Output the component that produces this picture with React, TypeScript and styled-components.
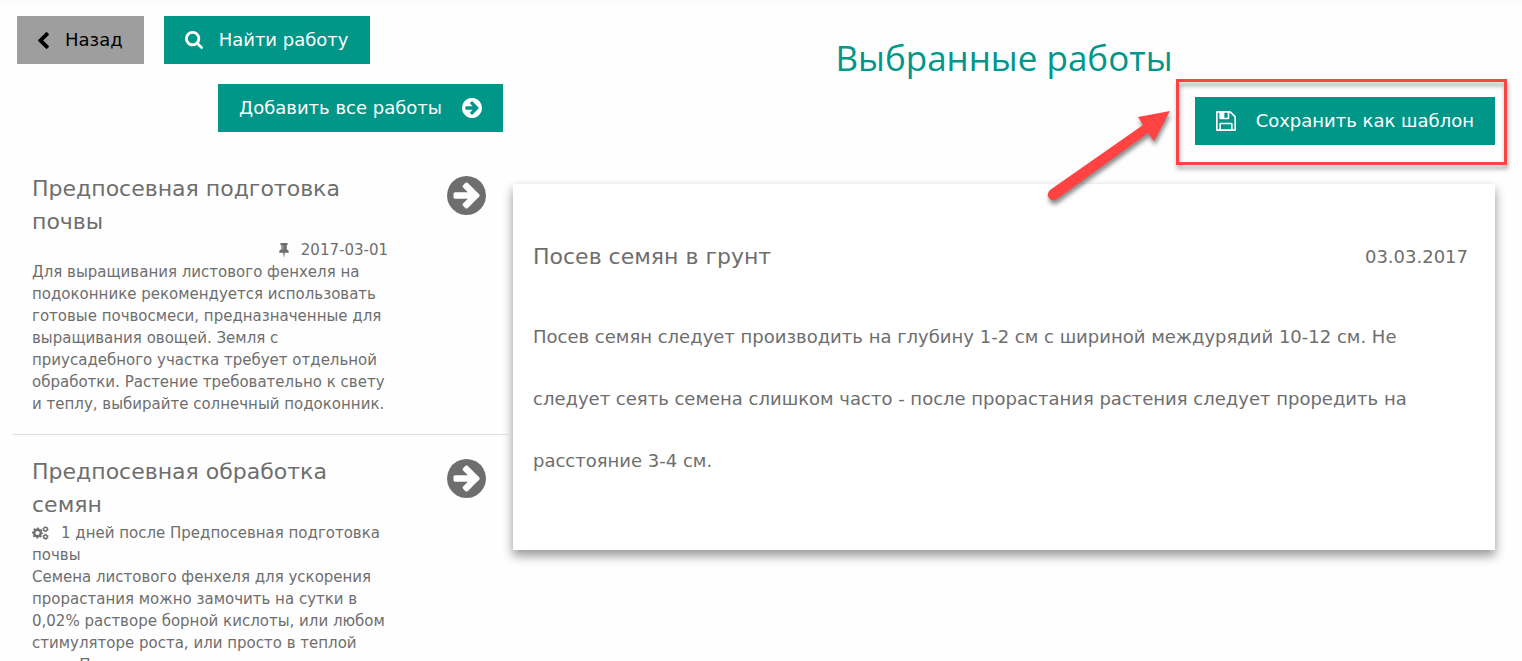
import React from "react";
import styled, { createGlobalStyle } from "styled-components";

const GlobalStyle = createGlobalStyle`
  *, *::before, *::after { box-sizing: border-box; }
  html { scrollbar-width: none; }
  body {
    margin: 0;
    background: #fefefe;
    color: #6e6e6e;
    font: 15px/22px Verdana, "DejaVu Sans", sans-serif;
  }
  h1, h2, p { margin: 0; font-weight: 400; }
`;

const Page = styled.div`
  border-top: 3px solid #fafafa;
  padding: 13px 27px 0 13px;
  display: grid;
  grid-template-columns: 1fr 2fr;
  align-items: start;
`;

const Sidebar = styled.aside`
  min-width: 0;
`;

const Toolbar = styled.div<{ $end?: boolean }>`
  display: flex;
  gap: 20px;
  padding: 0 4px;
  margin-bottom: 20px;
  justify-content: ${(p) => (p.$end ? "flex-end" : "flex-start")};
`;

const Button = styled.button<{ $muted?: boolean; $wide?: boolean }>`
  display: inline-flex;
  align-items: center;
  gap: ${(p) => (p.$wide ? 20 : 16)}px;
  height: 48px;
  padding: 0 21px;
  border: 0;
  background: ${(p) => (p.$muted ? "#9e9e9e" : "#009688")};
  color: ${(p) => (p.$muted ? "#000" : "#fff")};
  font: inherit;
  font-size: 18px;
  white-space: nowrap;
  cursor: pointer;
`;

const WorkList = styled.ul`
  list-style: none;
  margin: 0;
  padding: 0;
`;

const WorkItem = styled.li`
  display: flex;
  justify-content: space-between;
  align-items: flex-start;
  padding: 20px 19px 19px;
  border-bottom: 1px solid #ddd;
`;

const WorkBody = styled.div`
  width: 356px;
`;

const WorkTitle = styled.h2`
  padding-bottom: 1px;
  font-size: 22px;
  line-height: 33px;
`;

const WorkMeta = styled.p<{ $end?: boolean }>`
  text-align: ${(p) => (p.$end ? "right" : "left")};

  svg {
    margin-right: 12px;
    vertical-align: -2px;
  }
`;

const WorkText = styled.p``;

const AddButton = styled.button`
  display: flex;
  padding: 4px 2px;
  border: 0;
  background: none;
  color: inherit;
  cursor: pointer;
`;

const Selected = styled.main`
  min-width: 0;
  padding-left: 6px;
`;

const SelectedTitle = styled.h1`
  padding-top: 12px;
  color: #009688;
  font-family: "Segoe UI", "Open Sans", sans-serif;
  font-size: 35px;
  line-height: 60px;
  text-align: center;
`;

const SaveRow = styled.div`
  display: flex;
  justify-content: flex-end;
  margin: 9px 0 39px;
`;

const Highlighted = styled.div`
  position: relative;
`;

const HighlightFrame = styled.div`
  position: absolute;
  inset: -18px -12px -20px -19px;
  border: 3px solid #ff4343;
  filter: drop-shadow(1px 4px 2px rgba(0, 0, 0, 0.35));
  pointer-events: none;
`;

const HighlightArrow = styled.svg`
  position: absolute;
  right: 100%;
  top: 0;
  margin-right: 14px;
  overflow: visible;
  filter: drop-shadow(1px 4px 2px rgba(0, 0, 0, 0.45));
  pointer-events: none;
`;

const Card = styled.article`
  padding: 42px 27px 58px 20px;
  background: #fff;
  box-shadow: 0 6px 10px rgba(0, 0, 0, 0.25), 0 5px 10px rgba(0, 0, 0, 0.2);
  font-size: 18px;
  line-height: 62px;
`;

const CardHeader = styled.header`
  display: flex;
  justify-content: space-between;
  margin-bottom: 18px;
`;

const CardTitle = styled.h2`
  font-size: 22px;
`;

const CardText = styled.p`
  padding-right: 40px;
`;

const glyphs = {
  back: "M1427 301l-531 531 531 531q19 19 19 45t-19 45l-166 166q-19 19-45 19t-45-19l-742-742q-19-19-19-45t19-45l742-742q19-19 45-19t45 19l166 166q19 19 19 45t-19 45z",
  search:
    "M1216 832q0-185-131.5-316.5t-316.5-131.5-316.5 131.5-131.5 316.5 131.5 316.5 316.5 131.5 316.5-131.5 131.5-316.5zm512 832q0 52-38 90t-90 38q-54 0-90-38l-343-342q-179 124-399 124-143 0-273.5-55.5t-225-150-150-225-55.5-273.5 55.5-273.5 150-225 225-150 273.5-55.5 273.5 55.5 225 150 150 225 55.5 273.5q0 220-124 399l343 343q37 37 37 90z",
  next: "M1413 896q0-27-18-45l-91-91-362-362q-18-18-45-18t-45 18l-91 91q-18 18-18 45t18 45l189 189h-502q-26 0-45 19t-19 45v128q0 26 19 45t45 19h502l-189 189q-19 19-19 45t19 45l91 91q18 18 45 18t45-18l362-362 91-91q18-18 18-45zm251 0q0 209-103 385.5t-279.5 279.5-385.5 103-385.5-103-279.5-279.5-103-385.5 103-385.5 279.5-279.5 385.5-103 385.5 103 279.5 279.5 103 385.5z",
  save: "M512 1536h768v-384h-768v384zm896 0h128v-896q0-14-10-38.5t-20-34.5l-281-281q-10-10-34-20t-39-10v416q0 40-28 68t-68 28h-576q-40 0-68-28t-28-68v-416h-128v1280h128v-416q0-40 28-68t68-28h832q40 0 68 28t28 68v416zm-384-928v-320q0-13-9.5-22.5t-22.5-9.5h-192q-13 0-22.5 9.5t-9.5 22.5v320q0 13 9.5 22.5t22.5 9.5h192q13 0 22.5-9.5t9.5-22.5zm640 32v928q0 40-28 68t-68 28h-1344q-40 0-68-28t-28-68v-1344q0-40 28-68t68-28h928q40 0 88 20t76 48l280 280q28 28 48 76t20 88z",
  pin: "M800 864v-448q0-14-9-23t-23-9-23 9-9 23v448q0 14 9 23t23 9 23-9 9-23zm672 352q0 26-19 45t-45 19h-429l-51 483q-2 12-10.5 20.5t-20.5 8.5h-1q-27 0-32-27l-76-485h-404q-26 0-45-19t-19-45q0-123 78.5-221.5t177.5-98.5v-512q-52 0-90-38t-38-90 38-90 90-38h640q52 0 90 38t38 90-38 90-90 38v512q99 0 177.5 98.5t78.5 221.5z",
};

// Visible bounds of each glyph on its 1792-unit grid.
const bounds: Record<keyof typeof glyphs, [number, number, number, number]> = {
  back: [410, 26, 1036, 1612],
  search: [64, 128, 1664, 1664],
  next: [128, 128, 1536, 1536],
  save: [128, 128, 1536, 1536],
  pin: [320, 128, 1152, 1664],
};

function Icon({ name, height }: { name: keyof typeof glyphs; height: number }) {
  const [x, y, w, h] = bounds[name];
  return (
    <svg
      viewBox={`${x} ${y} ${w} ${h}`}
      width={Math.round((height * w) / h)}
      height={height}
      fill="currentColor"
      aria-hidden="true"
    >
      <path d={glyphs[name]} />
    </svg>
  );
}

// One large toothed wheel with two small ones to its right.
function CogsIcon() {
  return (
    <svg width="17" height="14" viewBox="0 0 17 14" fill="none" stroke="currentColor" aria-hidden="true">
      <circle cx="5.5" cy="7" r="3.3" strokeWidth="2.4" />
      <circle cx="5.5" cy="7" r="4.8" strokeWidth="1.5" strokeDasharray="1.9 1.87" strokeDashoffset="0.95" />
      <circle cx="13.5" cy="3.2" r="1.8" strokeWidth="1.4" />
      <circle cx="13.5" cy="3.2" r="2.7" strokeWidth="0.8" strokeDasharray="1.4 1.43" />
      <circle cx="13.5" cy="10.8" r="1.8" strokeWidth="1.4" />
      <circle cx="13.5" cy="10.8" r="2.7" strokeWidth="0.8" strokeDasharray="1.4 1.43" />
    </svg>
  );
}

interface Work {
  title: string;
  date?: string;
  after?: string;
  text: string;
}

const works: Work[] = [
  {
    title: "Предпосевная подготовка почвы",
    date: "2017-03-01",
    text: "Для выращивания листового фенхеля на подоконнике рекомендуется использовать готовые почвосмеси, предназначенные для выращивания овощей. Земля с приусадебного участка требует отдельной обработки. Растение требовательно к свету и теплу, выбирайте солнечный подоконник.",
  },
  {
    title: "Предпосевная обработка семян",
    after: "1 дней после Предпосевная подготовка почвы",
    text: "Семена листового фенхеля для ускорения прорастания можно замочить на сутки в 0,02% растворе борной кислоты, или любом стимуляторе роста, или просто в теплой воде. После",
  },
];

export default function App() {
  return (
    <>
      <GlobalStyle />
      <Page>
        <Sidebar>
          <Toolbar>
            <Button $muted>
              <Icon name="back" height={17} />
              Назад
            </Button>
            <Button>
              <Icon name="search" height={18} />
              Найти работу
            </Button>
          </Toolbar>
          <Toolbar $end>
            <Button $wide>
              Добавить все работы
              <Icon name="next" height={20} />
            </Button>
          </Toolbar>
          <WorkList>
            {works.map((work) => (
              <WorkItem key={work.title}>
                <WorkBody>
                  <WorkTitle>{work.title}</WorkTitle>
                  {work.date && (
                    <WorkMeta $end>
                      <Icon name="pin" height={14} />
                      {work.date}
                    </WorkMeta>
                  )}
                  {work.after && (
                    <WorkMeta>
                      <CogsIcon />
                      {work.after}
                    </WorkMeta>
                  )}
                  <WorkText>{work.text}</WorkText>
                </WorkBody>
                <AddButton aria-label="Добавить работу">
                  <Icon name="next" height={39} />
                </AddButton>
              </WorkItem>
            ))}
          </WorkList>
        </Sidebar>
        <Selected>
          <SelectedTitle>Выбранные работы</SelectedTitle>
          <SaveRow>
            <Highlighted>
              <Button $wide>
                <Icon name="save" height={20} />
                Сохранить как шаблон
              </Button>
              <HighlightFrame />
              <HighlightArrow width="132" height="108" viewBox="0 0 132 108" aria-hidden="true">
                <path
                  d="M121 14 L89 20 L94 28 L1 93 Q-3 97 0 101 Q3 105 8 102 L99 36 L105 44 Z"
                  fill="#ff4343"
                />
              </HighlightArrow>
            </Highlighted>
          </SaveRow>
          <Card>
            <CardHeader>
              <CardTitle>Посев семян в грунт</CardTitle>
              <time dateTime="2017-03-03">03.03.2017</time>
            </CardHeader>
            <CardText>
              Посев семян следует производить на глубину 1-2 см с шириной междурядий 10-12 см. Не
              следует сеять семена слишком часто - после прорастания растения следует проредить на
              расстояние 3-4 см.
            </CardText>
          </Card>
        </Selected>
      </Page>
    </>
  );
}
